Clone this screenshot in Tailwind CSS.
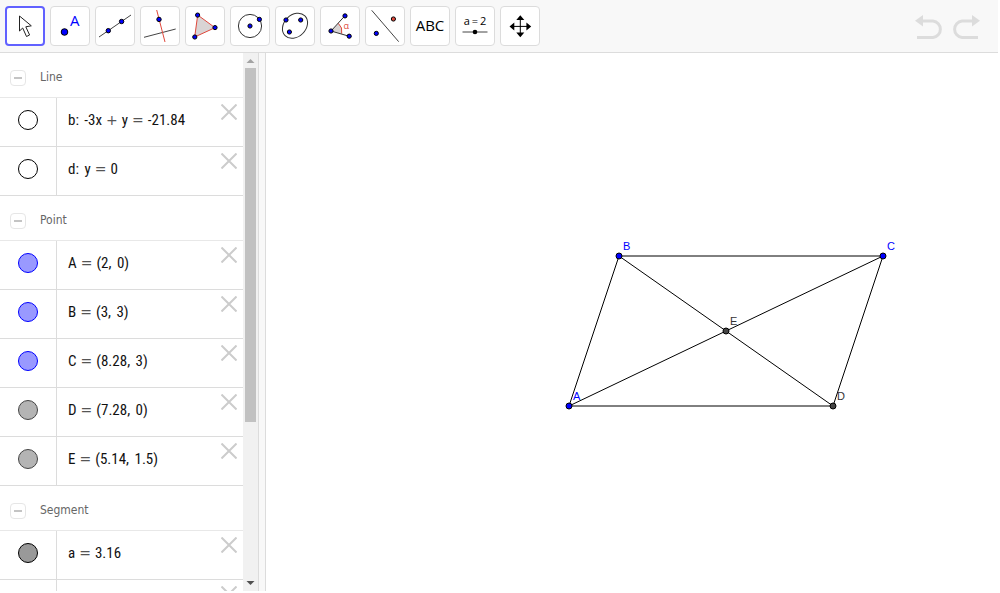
<!DOCTYPE html>
<html lang="en">
<head>
    <meta charset="UTF-8">
    <meta name="viewport" content="width=device-width, initial-scale=1.0">
    <title>Geometry</title>
    <script src="https://cdn.jsdelivr.net/npm/@tailwindcss/browser@4"></script>
</head>
<body class="flex flex-col h-screen overflow-hidden bg-white pr-0.5 pb-0.5">
    <!-- Toolbar -->
    <header class="flex items-center shrink-0 pl-[5px] pr-[18px] py-1.5 bg-[#f8f8f8] border-b border-[#dcdcdc]">
        <div id="tools" class="flex gap-[5px]">
            <button aria-label="Move" class="flex items-center justify-center size-10 bg-white border-2 border-[#6161ff] rounded">
                <svg viewBox="2 2 36 36" class="size-9 shrink-0" fill="#fff" stroke="#222" stroke-width="1">
                    <path d="M14.5 10V25L17.7 22L21.5 30.5L24.6 29L20.8 20.8L26.3 19.8Z"/>
                </svg>
            </button>
            <button aria-label="Point" class="flex items-center justify-center size-10 bg-white border border-[#dcdcdc] rounded">
                <svg viewBox="2 2 36 36" class="size-9 shrink-0" fill="#00f" stroke="#000">
                    <circle cx="14.5" cy="26" r="3.3"/>
                    <text x="20" y="20" stroke="none" font-family="Open Sans, sans-serif" font-size="15">A</text>
                </svg>
            </button>
            <button aria-label="Line" class="flex items-center justify-center size-10 bg-white border border-[#dcdcdc] rounded">
                <svg viewBox="2 2 36 36" class="size-9 shrink-0" fill="#00f" stroke="#000">
                    <path d="M4 31L36 9" stroke="#444"/>
                    <circle cx="13.3" cy="24.7" r="2.2"/>
                    <circle cx="26.6" cy="15.5" r="2.2"/>
                </svg>
            </button>
            <button aria-label="Perpendicular line" class="flex items-center justify-center size-10 bg-white border border-[#dcdcdc] rounded">
                <svg viewBox="2 2 36 36" class="size-9 shrink-0" fill="#00f" stroke="#000">
                    <path d="M4 31.3L35.7 23" stroke="#444"/>
                    <path d="M16.7 4L25 36" stroke="#e0483c"/>
                    <circle cx="19" cy="13.4" r="2.2"/>
                </svg>
            </button>
            <button aria-label="Polygon" class="flex items-center justify-center size-10 bg-white border border-[#dcdcdc] rounded">
                <svg viewBox="2 2 36 36" class="size-9 shrink-0" fill="#00f" stroke="#000">
                    <path d="M12.7 9L30 21.7L9.7 31Z" fill="#d9d4d4" stroke="#e0483c"/>
                    <circle cx="12.6" cy="9.1" r="2.1"/>
                    <circle cx="30" cy="21.6" r="2.1"/>
                    <circle cx="9.8" cy="31" r="2.1"/>
                </svg>
            </button>
            <button aria-label="Circle" class="flex items-center justify-center size-10 bg-white border border-[#dcdcdc] rounded">
                <svg viewBox="2 2 36 36" class="size-9 shrink-0" fill="#00f" stroke="#000">
                    <circle cx="20" cy="20" r="11.6" fill="none" stroke="#333"/>
                    <circle cx="20" cy="20" r="2.1"/>
                    <circle cx="29.4" cy="13.4" r="2.1"/>
                </svg>
            </button>
            <button aria-label="Ellipse" class="flex items-center justify-center size-10 bg-white border border-[#dcdcdc] rounded">
                <svg viewBox="2 2 36 36" class="size-9 shrink-0" fill="#00f" stroke="#000">
                    <ellipse cx="20" cy="19.8" rx="14" ry="10.9" fill="none" stroke="#333" transform="rotate(-45 20 19.8)"/>
                    <circle cx="11" cy="14" r="2.1"/>
                    <circle cx="25.7" cy="14" r="2.1"/>
                    <circle cx="14.4" cy="26" r="2.1"/>
                </svg>
            </button>
            <button aria-label="Angle" class="flex items-center justify-center size-10 bg-white border border-[#dcdcdc] rounded">
                <svg viewBox="2 2 36 36" class="size-9 shrink-0" fill="#00f" stroke="#000">
                    <path d="M11 25L18.3 17.3Q23 21.5 21.7 27.7Z" fill="#d9d4d4" stroke="none"/>
                    <path d="M18.3 17.3Q23 21.5 21.7 27.7" fill="none" stroke="#e0483c"/>
                    <path d="M25 9.7L11 25L29.3 30.3" fill="none" stroke="#333"/>
                    <circle cx="25" cy="9.9" r="2.1"/>
                    <circle cx="11" cy="25" r="2.1"/>
                    <circle cx="29.2" cy="30.2" r="2.1"/>
                    <text x="23.5" y="23" fill="#e0483c" stroke="none" font-family="Open Sans, sans-serif" font-size="9">α</text>
                </svg>
            </button>
            <button aria-label="Reflect about line" class="flex items-center justify-center size-10 bg-white border border-[#dcdcdc] rounded">
                <svg viewBox="2 2 36 36" class="size-9 shrink-0" fill="#00f" stroke="#000">
                    <path d="M6.7 4.3L33.7 35.7" stroke="#444"/>
                    <circle cx="28.4" cy="13" r="2.1" fill="#e0483c"/>
                    <circle cx="11.3" cy="27.4" r="2.1"/>
                </svg>
            </button>
            <button aria-label="Text" class="flex items-center justify-center size-10 bg-white border border-[#dcdcdc] rounded">
                <svg viewBox="2 2 36 36" class="size-9 shrink-0">
                    <text x="20" y="25" text-anchor="middle" font-family="Open Sans, sans-serif" font-size="15">ABC</text>
                </svg>
            </button>
            <button aria-label="Slider" class="flex items-center justify-center size-10 bg-white border border-[#dcdcdc] rounded">
                <svg viewBox="2 2 36 36" class="size-9 shrink-0">
                    <text x="20" y="19" text-anchor="middle" font-family="Open Sans, sans-serif" font-size="11">a&#8201;=&#8201;2</text>
                    <path d="M7.5 26H32.5" stroke="#444"/>
                    <circle cx="20" cy="26" r="2.3"/>
                </svg>
            </button>
            <button aria-label="Move view" class="flex items-center justify-center size-10 bg-white border border-[#dcdcdc] rounded">
                <svg viewBox="2 2 36 36" class="size-9 shrink-0">
                    <path d="M20.3 12V29M12 20.4H29" stroke="#000"/>
                    <path d="M20.3 9.3L24.3 14H16.3ZM20.3 31.3L24.3 26.6H16.3ZM9.5 20.4L14.3 16.4V24.4ZM31.2 20.4L26.4 16.4V24.4Z"/>
                </svg>
            </button>
        </div>
        <div class="flex gap-[9px] ml-auto">
            <button aria-label="Undo">
                <svg viewBox="0 0 28 28" class="size-7" fill="none" stroke="#dcdcdc" stroke-width="3">
                    <path d="M7 9H18A8.3 8.3 0 0 1 18 25.5H2"/>
                    <path d="M0 8.7L8 3V14.5Z" fill="#dcdcdc" stroke="none"/>
                </svg>
            </button>
            <button aria-label="Redo">
                <svg viewBox="0 0 28 28" class="size-7" fill="none" stroke="#dcdcdc" stroke-width="3">
                    <path d="M21 9H10A8.3 8.3 0 0 0 10 25.5H26"/>
                    <path d="M28 8.7L20 3V14.5Z" fill="#dcdcdc" stroke="none"/>
                </svg>
            </button>
        </div>
    </header>

    <main class="flex flex-1 min-h-0">
        <!-- Algebra view -->
        <aside class="flex w-[259px] shrink-0 border-r border-[#dcdcdc]">
            <div id="algebra" class="flex-1 overflow-hidden"></div>
            <div class="flex flex-col items-center w-[15px] bg-[#f1f1f1]">
                <svg viewBox="0 0 15 15" class="w-[15px] h-[15px] shrink-0" fill="#a3a3a3"><path d="M3.5 10L7.5 6L11.5 10Z"/></svg>
                <div class="w-[11px] h-[354px] bg-[#c1c1c1]"></div>
                <svg viewBox="0 0 15 15" class="w-[15px] h-[15px] shrink-0 mt-auto" fill="#505050"><path d="M3.5 5L7.5 9L11.5 5Z"/></svg>
            </div>
        </aside>
        <div class="w-[7px] shrink-0 bg-[#f8f8f8] border-r border-[#dcdcdc]"></div>

        <!-- Graphics view -->
        <svg class="flex-1 h-full min-w-0" font-family="Liberation Sans, sans-serif" font-size="11">
            <g fill="none" stroke="#000">
                <path d="M303 353L353 203H617L567 353Z"/>
                <path d="M303 353L617 203M353 203L567 353"/>
            </g>
            <g fill="#00f" stroke="#000">
                <circle cx="303" cy="353" r="3"/>
                <circle cx="353" cy="203" r="3"/>
                <circle cx="617" cy="203" r="3"/>
            </g>
            <g fill="#444" stroke="#000">
                <circle cx="567" cy="353" r="3"/>
                <circle cx="460" cy="278" r="3"/>
            </g>
            <g fill="#00f">
                <text x="307" y="347">A</text>
                <text x="357" y="197">B</text>
                <text x="621" y="197">C</text>
            </g>
            <g fill="#333">
                <text x="571" y="347">D</text>
                <text x="464" y="272">E</text>
            </g>
        </svg>
    </main>

    <script>
        const colors = {
            hidden: 'bg-white border-black',
            free: 'bg-[#9999ff] border-[#0000ff]',
            dependent: 'bg-[#b4b4b4] border-[#444444]',
            segment: 'bg-[#999999] border-black'
        };

        const groups = [
            { name: 'Line', items: [['b: -3x + y = -21.84', 'hidden'], ['d: y = 0', 'hidden']] },
            { name: 'Point', items: [
                ['A = (2, 0)', 'free'],
                ['B = (3, 3)', 'free'],
                ['C = (8.28, 3)', 'free'],
                ['D = (7.28, 0)', 'dependent'],
                ['E = (5.14, 1.5)', 'dependent']
            ] },
            // the last row is scrolled out of view below its top edge
            { name: 'Segment', items: [['a = 3.16', 'segment'], ['', 'segment']] }
        ];

        // operators and commas are set wider than the rest of the expression
        function formatMath(text) {
            return text
                .replace(/ ([=+]) /g, '<span class="px-1 font-[DejaVu_Sans] text-sm text-[#555]">$1</span>')
                .replace(/([,:]) /g, '<span class="pr-0.5">$1 </span>');
        }

        document.getElementById('algebra').innerHTML = groups.map(group => `
            <section>
                <h2 class="flex items-center h-[45px] pl-2.5 gap-3.5 pt-1.5 border-b border-[#e8e8e8] font-['DejaVu_Sans_Condensed','DejaVu_Sans',sans-serif] text-xs text-[#666]">
                    <button aria-label="Collapse ${group.name}" class="flex items-center justify-center size-4 border border-[#e6e6e6] rounded-sm">
                        <span class="w-2 h-0.5 bg-[#c4c4c4]"></span>
                    </button>
                    <span class="pb-0.5">${group.name}</span>
                </h2>
                <ul>${group.items.map(([text, kind]) => `
                    <li class="flex h-[49px] border-b border-[#dcdcdc]">
                        <div class="flex items-center justify-center w-[57px] pb-1 border-r border-[#dcdcdc]">
                            <button aria-label="Show ${text}" class="size-5 rounded-full border ${colors[kind]}"></button>
                        </div>
                        <div class="flex items-center flex-1 pl-[11px] pb-1 font-['Roboto_Condensed',Roboto,sans-serif] text-[15px] text-[#111] whitespace-nowrap"><span>${formatMath(text)}</span></div>
                        <button aria-label="Delete ${text}" class="self-start mt-1.5 mr-1.5">
                            <svg viewBox="0 0 16 16" class="size-4" stroke="#ccc" stroke-width="2"><path d="M0.5 0.5L15.5 15.5M15.5 0.5L0.5 15.5"/></svg>
                        </button>
                    </li>`).join('')}
                </ul>
            </section>
        `).join('');
    </script>
</body>
</html>
